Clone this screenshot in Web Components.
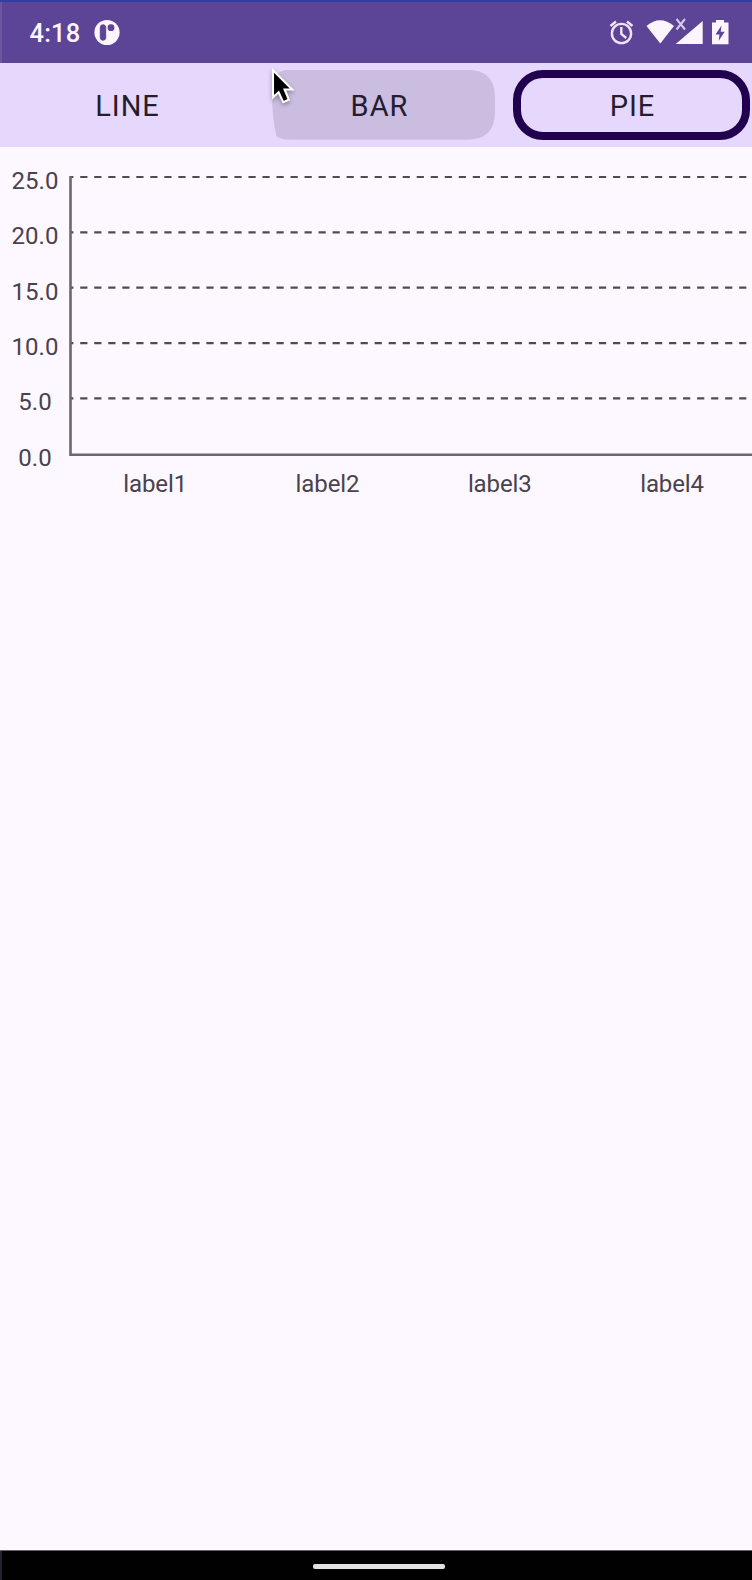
<!DOCTYPE html>
<html lang="en"><head><meta charset="utf-8"><title>Charts</title>
<style>html,body{margin:0;height:100%;overflow:hidden;background:#fdf8ff}body{font-family:Roboto,"Liberation Sans",sans-serif}</style></head>
<body><chart-app></chart-app>
<script>
const define=(name,html,setup)=>customElements.define(name,class extends HTMLElement{
  connectedCallback(){ if(this.shadowRoot)return; const t=document.createElement('template');t.innerHTML=html;
    this.attachShadow({mode:'open'}).append(t.content.cloneNode(true)); if(setup)setup(this,this.shadowRoot); }
});
define('status-bar',`<style>
:host{display:flex;box-sizing:border-box;height:62.5px;background:#5c4496;border-top:2px solid #303fa3;color:#fbf5ff;box-shadow:inset 2px 0 #6b579f;justify-content:space-between}
.time{font-size:25.5px;font-weight:500;line-height:30px;margin:16px 0 0 29.5px;letter-spacing:.2px}
.left{display:flex}.left svg{margin:17px 0 0 12px}.right{display:block}
</style><div class="left"><span class="time">4:18</span>
<svg width="28" height="28" viewBox="0 0 28 28"><circle cx="14" cy="13.5" r="12.6" fill="#fbf5ff"/><rect x="7.3" y="5.8" width="5.4" height="15.4" rx="2.7" fill="#5c4496" stroke="#5c4496"/><circle cx="18" cy="8.7" r="3.4" fill="#5c4496"/></svg></div>
<svg class="right" width="152" height="61" viewBox="600 2 152 61" fill="#fbf5ff">
<g fill="none" stroke="#eee3f7" stroke-width="2.4"><circle cx="621.5" cy="33.5" r="9.6"/><path d="M621.3 27v7l5 4M610.5 26l5.5-4.5M627 21.5l5.5 4.5"/></g>
<path d="M646.5 26q13.5-11.5 27.5 0L660.3 43.5z"/><path d="M702.7 21v23h-27z"/><path d="M676.5 19l8.5 10.5m0-10.5l-8.5 10.5" stroke="#d9cbe9" stroke-width="2"/>
<path d="M712 22.5h4v-2.5h8v2.5h4.5v21.7H712z"/><path d="M721.5 25.5l-6 9h4l-.8 6.3 6-9h-4z" fill="#5c4496"/></svg>`);
define('chart-tab',`<style>
:host{display:block;box-sizing:border-box;height:84px;padding:7.2px 6px 6.8px 8px}
.box{box-sizing:border-box;height:70px;display:flex;align-items:center;justify-content:center;font-size:29px;letter-spacing:1px;color:#251c30;padding-top:3px}
:host([state=pressed]){padding-left:18px;padding-right:11px}
:host([state=pressed]) .box{background:#cbbde0;padding-right:7px;clip-path:path("M1 24Q1 0 18 0H196Q224 0 224 28V42Q224 70 196 70H20Q10 70 5.5 66.5Q1 48 1 24Z")}
:host([state=focused]){padding-left:6.5px;padding-right:9px}
:host([state=focused]) .box{border:8.5px solid #210050;border-radius:30px;padding-left:2.5px}
</style><div class="box"><slot></slot></div>`);
define('tab-bar',`<style>:host{display:grid;grid-template-columns:253px 253px 253px;height:84.5px;background:#e6d8fc;overflow:hidden}
::slotted(*){min-width:0}</style><slot></slot>`);
define('bar-chart',`<style>:host{display:block}svg{display:block}text{font-size:24px;fill:#49424e;text-anchor:middle}</style>
<svg width="752" height="400" viewBox="0 147 752 400"><g id="g"></g><path d="M70.5 176V454.7H752" fill="none" stroke="#6d6571" stroke-width="2.6"/></svg>`,(el,root)=>{
  const step=55.35; let s='<defs><clipPath id="plot"><rect x="70" y="160" width="682" height="300"/></clipPath></defs>';
  el.getAttribute('ticks').split(',').forEach((t,i,a)=>{
    const y=177+i*step;
    if(i<a.length-1)s+=`<path d="M66.2 ${y}H748" stroke="#514955" stroke-width="2.2" stroke-dasharray="7.2 6.82" clip-path="url(#plot)"/>`;
    s+=`<text x="35" y="${y+11.8}">${t}</text>`;
  });
  el.getAttribute('labels').split(',').forEach((t,i)=>{s+=`<text x="${155.2+i*172.3}" y="492.2" letter-spacing="-.1">${t}</text>`;});
  root.getElementById('g').innerHTML=s;
});
define('nav-bar',`<style>:host{display:flex;box-sizing:border-box;height:30px;background:#010101;border-top:1px solid #625f66;box-shadow:inset 2px 0 #24232b;justify-content:center}
i{display:block;width:132px;height:5px;border-radius:2px;background:#e4e1e5;margin:13px 0 0 5px}</style><i></i>`);
define('mouse-pointer',`<style>:host{position:absolute;left:268px;top:63px;filter:drop-shadow(0 2px 2px #0005)}svg{display:block}</style>
<svg width="32" height="44" viewBox="268 63 32 44"><path d="M273 70.2V97.3L278.6 92.3L283.2 102.2L288.8 99.6L284.6 89.5H292.2Z" stroke="#fff" stroke-width="2.1" fill="#000"/></svg>`);
define('chart-app',`<style>:host{display:flex;flex-direction:column;position:relative;width:752px;height:1580px;background:#fdf8ff;overflow:hidden}main{flex:1}</style>
<status-bar></status-bar><tab-bar><chart-tab>LINE</chart-tab><chart-tab state="pressed">BAR</chart-tab><chart-tab state="focused">PIE</chart-tab></tab-bar>
<main><bar-chart ticks="25.0,20.0,15.0,10.0,5.0,0.0" labels="label1,label2,label3,label4"></bar-chart></main><nav-bar></nav-bar><mouse-pointer></mouse-pointer>`);
</script></body></html>
